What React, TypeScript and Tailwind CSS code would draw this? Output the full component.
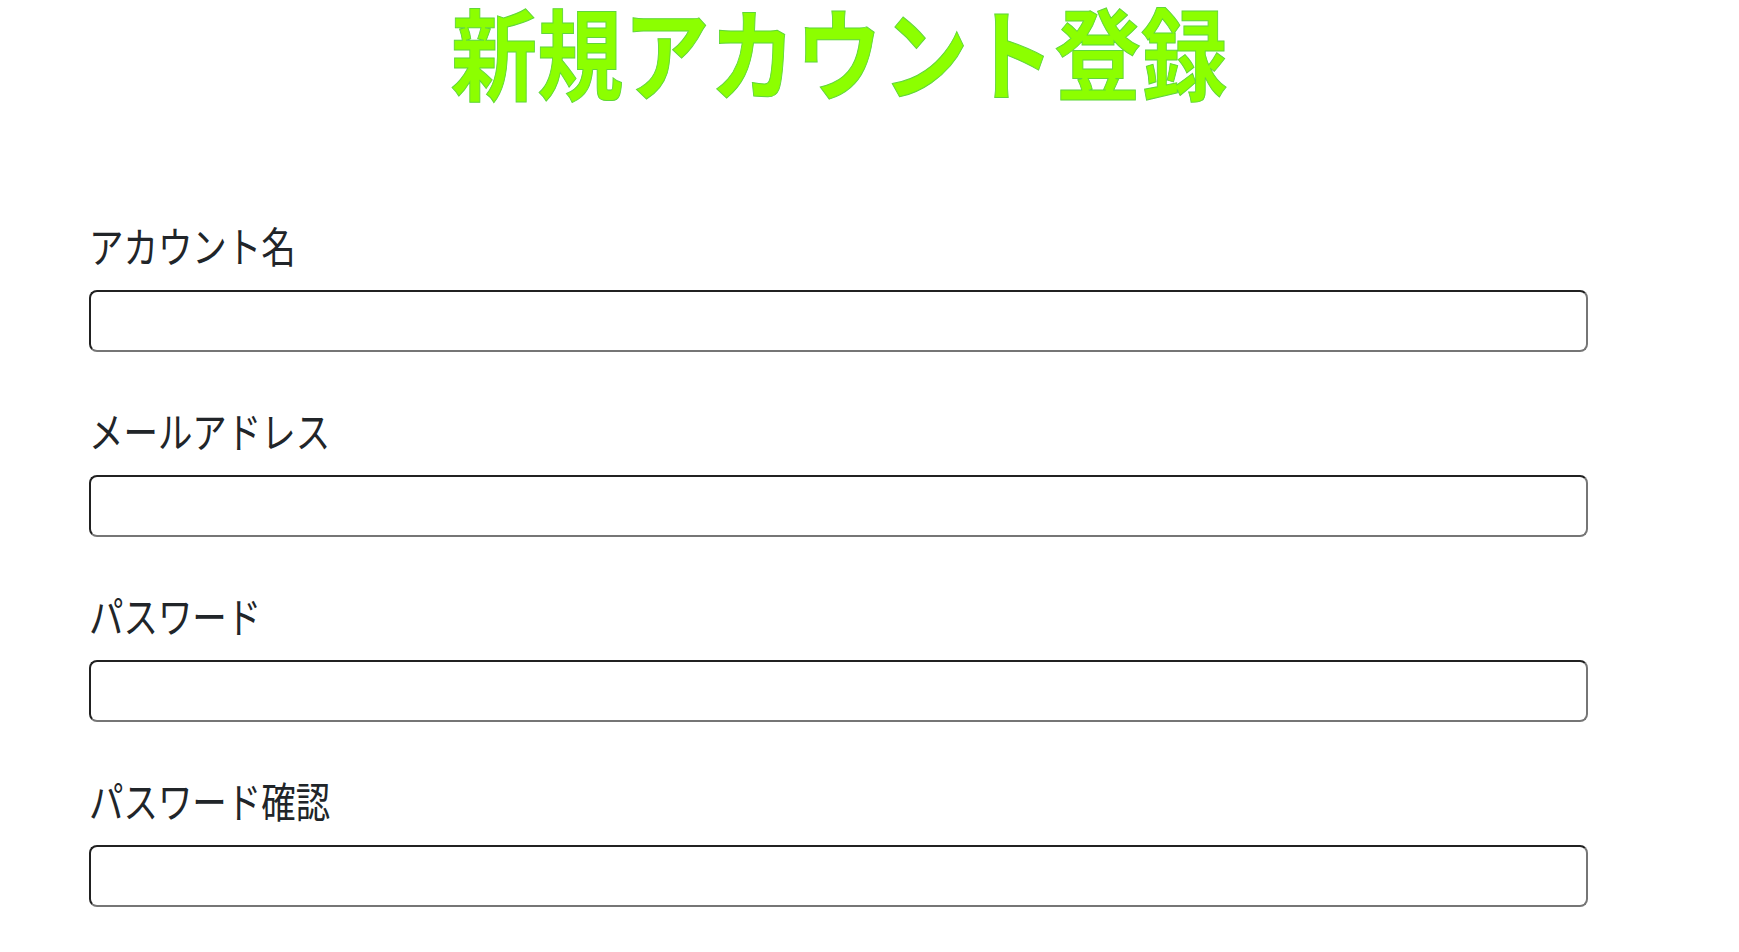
const fields = [
  { id: "name", label: "アカウント名", type: "text" },
  { id: "email", label: "メールアドレス", type: "email" },
  { id: "password", label: "パスワード", type: "password" },
  { id: "confirm", label: "パスワード確認", type: "password" },
];

export default function App() {
  return (
    <div className="min-h-screen bg-white font-['Noto_Sans_CJK_JP','Noto_Sans',sans-serif] text-[#212529]">
      <main className="ml-[89px] w-[1499px]">
        {/* Title */}
        <h1 className="text-center text-[100px] font-bold leading-none text-[#8cff00] [-webkit-text-stroke:1px_#5fd63a]">
          <span className="inline-block scale-x-[0.863]">新規アカウント登録</span>
        </h1>

        {/* Form */}
        <form className="mt-[124px] flex flex-col gap-[57px]">
          {fields.map((f) => (
            <div key={f.id} className="flex flex-col">
              <label htmlFor={f.id} className="block text-[42px] font-normal leading-none">
                <span className="inline-block origin-left scale-x-[0.82]">{f.label}</span>
              </label>
              <input
                id={f.id}
                type={f.type}
                className="mt-[24px] h-[62px] w-full rounded-lg border-2 border-t-[#212121] border-l-[#212121] border-b-[#767676] border-r-[#767676] bg-white px-3 outline-none"
              />
            </div>
          ))}
        </form>
      </main>
    </div>
  );
}
